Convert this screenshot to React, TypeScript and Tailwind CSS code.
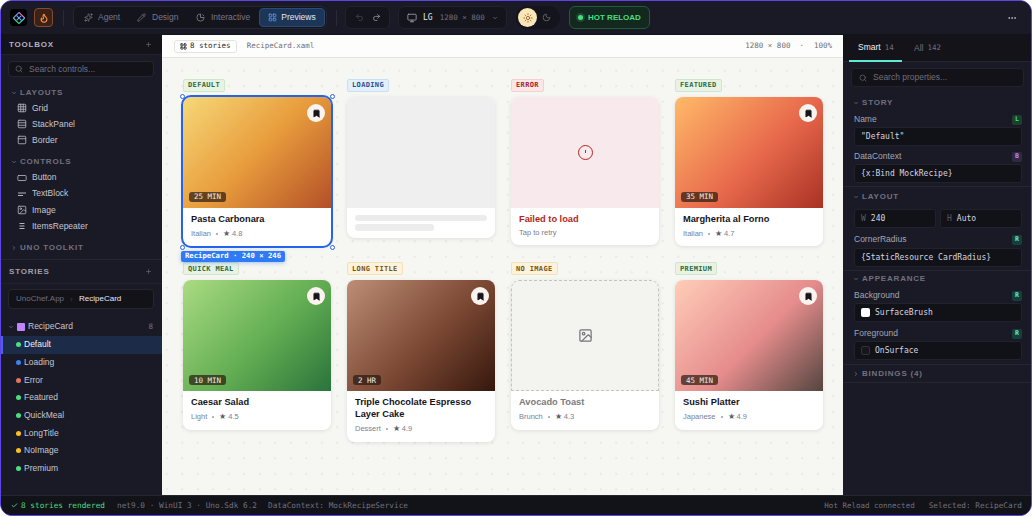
import React from 'react';
import {
  Plus, Search, ChevronDown, ChevronRight, Grid3x3, Rows3, PanelTop, RectangleHorizontal, Image as ImageIcon,
  Pencil, LayoutGrid, Undo2, Redo2, Monitor, Sun, Moon, Flame, Ellipsis, Bookmark, Check, Sparkles,
} from 'lucide-react';

const mono = "font-['DejaVu_Sans_Mono',monospace]";

const SectionHead: React.FC<{ label: string; open?: boolean; className?: string }> = ({ label, open = true, className = '' }) => (
  <div className={`flex items-center gap-[3px] pl-[10px] h-[10px] text-[8px] font-bold tracking-[0.1em] text-[#71717f] ${className}`}>
    {open ? <ChevronDown className="w-[6px] h-[6px]" strokeWidth={3} /> : <ChevronRight className="w-[6px] h-[6px]" strokeWidth={3} />}
    <span>{label}</span>
  </div>
);

const ToolRow: React.FC<{ icon: React.ReactNode; label: string }> = ({ icon, label }) => (
  <div className="flex items-center h-[16.2px] pl-[16px] text-[8.5px] text-[#c6c6d0]">
    <span className="w-[15px] flex items-center text-[#b4b4c0]">{icon}</span>
    <span>{label}</span>
  </div>
);

const Toolbox = () => (
  <div className="flex flex-col">
    <div className="h-[20px] flex items-center justify-between pl-[8px] pr-[10px] bg-[#131319] border-b border-[#22222c]">
      <span className="text-[8px] font-bold tracking-[0.1em] text-[#b4b4c0]">TOOLBOX</span>
      <Plus className="w-[7px] h-[7px] text-[#71717f]" />
    </div>
    <div className="ml-[7px] mr-[8px] mt-[6px] h-[16px] flex items-center gap-[6px] px-[6px] rounded-[4px] bg-[#121218] border border-[#262630] text-[8.5px] text-[#6f6f7d]">
      <Search className="w-[8px] h-[8px]" />
      <span>Search controls...</span>
    </div>
    <SectionHead label="LAYOUTS" className="mt-[11px]" />
    <div className="mt-[2px]">
      <ToolRow icon={<Grid3x3 className="w-[10px] h-[10px]" />} label="Grid" />
      <ToolRow icon={<Rows3 className="w-[10px] h-[10px]" />} label="StackPanel" />
      <ToolRow icon={<PanelTop className="w-[10px] h-[10px]" />} label="Border" />
    </div>
    <SectionHead label="CONTROLS" className="mt-[8px]" />
    <div className="mt-[3px]">
      <ToolRow icon={<RectangleHorizontal className="w-[10px] h-[10px]" />} label="Button" />
      <ToolRow
        icon={
          <svg viewBox="0 0 10 10" className="w-[10px] h-[10px]" stroke="currentColor" strokeWidth="1" fill="none">
            <path d="M1 4h8M1 6.5h5" />
          </svg>
        }
        label="TextBlock"
      />
      <ToolRow icon={<ImageIcon className="w-[10px] h-[10px]" />} label="Image" />
      <ToolRow
        icon={
          <svg viewBox="0 0 10 10" className="w-[10px] h-[10px]" stroke="currentColor" strokeWidth="1" fill="none">
            <path d="M2.5 2.5h5M2.5 5h5M2.5 7.5h5" />
          </svg>
        }
        label="ItemsRepeater"
      />
    </div>
    <SectionHead label="UNO TOOLKIT" open={false} className="mt-[9px]" />
  </div>
);

const stories = [
  { name: 'Default', dot: 'bg-[#4ade80]', active: true },
  { name: 'Loading', dot: 'bg-[#3b82f6]' },
  { name: 'Error', dot: 'bg-[#e8735a]' },
  { name: 'Featured', dot: 'bg-[#4ade80]' },
  { name: 'QuickMeal', dot: 'bg-[#4ade80]' },
  { name: 'LongTitle', dot: 'bg-[#fbbf24]' },
  { name: 'NoImage', dot: 'bg-[#fbbf24]' },
  { name: 'Premium', dot: 'bg-[#4ade80]' },
];

const Stories = () => (
  <div className="flex flex-col flex-1 mt-[6px] border-t border-[#262630]">
    <div className="h-[24px] flex items-center justify-between pl-[8px] pr-[10px] border-b border-[#22222c]">
      <span className="text-[8px] font-bold tracking-[0.1em] text-[#a0a0ac]">STORIES</span>
      <Plus className="w-[7px] h-[7px] text-[#71717f]" />
    </div>
    <div className="ml-[7px] mr-[8px] mt-[5px] h-[20px] flex items-center gap-[5px] px-[7px] rounded-[4px] bg-[#121218] border border-[#262630] text-[8px]">
      <span className="text-[#6f6f7d]">UnoChef.App</span>
      <ChevronRight className="w-[5px] h-[5px] text-[#6f6f7d]" />
      <span className="text-[#e8e8f0]">RecipeCard</span>
    </div>
    <div className="mt-[8px] h-[18.5px] flex items-center pl-[7px] pr-[9px] text-[8.5px] text-[#c6c6d0]">
      <ChevronDown className="w-[6px] h-[6px] text-[#71717f]" strokeWidth={3} />
      <span className="ml-[3px] w-[8px] h-[8px] rounded-[1px] bg-[#c084fc]" />
      <span className="ml-[3px] flex-1">RecipeCard</span>
      <span className={`${mono} text-[7.5px] text-[#71717f]`}>8</span>
    </div>
    {stories.map((s) => (
      <div
        key={s.name}
        className={`h-[17.7px] flex items-center gap-[3px] text-[8.5px] ${
          s.active ? 'bg-[#1c2b47] border-l-2 border-[#4f5fe0] pl-[13px] text-[#eef0f8]' : 'pl-[15px] text-[#c6c6d0]'
        }`}
      >
        <span className={`w-[5px] h-[5px] rounded-full ${s.dot}`} />
        <span>{s.name}</span>
      </div>
    ))}
  </div>
);

const TopBar = () => (
  <div className="h-[34px] flex items-center bg-[#191a25] border-b border-[#12121a] pl-[9px] pr-[14px] shrink-0">
    <div className="w-[17px] h-[17px] rounded-[4px] bg-black flex items-center justify-center">
      <svg viewBox="0 0 16 16" className="w-[14px] h-[14px]" fill="none" strokeWidth="1.3">
        <path d="M8 1.5 14.5 8" stroke="#f472b6" />
        <path d="M14.5 8 8 14.5" stroke="#22d3ee" />
        <path d="M8 14.5 1.5 8" stroke="#4ade80" />
        <path d="M1.5 8 8 1.5" stroke="#818cf8" />
        <path d="M5 5l6 6M5.5 10.5 10.5 5.5" stroke="#60a5fa" />
      </svg>
    </div>
    <div className="ml-[7px] w-[19px] h-[19px] rounded-[4px] bg-[#3b2219] border border-[#8a4a2a] flex items-center justify-center">
      <Flame className="w-[10px] h-[10px] text-[#fb923c]" strokeWidth={2.5} />
    </div>
    <div className="ml-[10px] w-px h-[16px] bg-[#2a2a36]" />
    <div className="ml-[9px] w-[254px] h-[23px] flex items-center pl-[2px] rounded-[6px] bg-[#14141c] border border-[#262630] text-[8.5px] text-[#77778a]">
      <div className="flex items-center gap-[5px] pl-[8px] w-[53px]">
        <Sparkles className="w-[9px] h-[9px]" />
        <span>Agent</span>
      </div>
      <div className="flex items-center gap-[6px] pl-[8px] w-[59px]">
        <Pencil className="w-[9px] h-[9px]" />
        <span>Design</span>
      </div>
      <div className="flex items-center gap-[6px] pl-[8px] w-[71px]">
        <svg viewBox="0 0 10 10" className="w-[9px] h-[9px]" fill="none" stroke="currentColor" strokeWidth="1">
          <path d="M5 1a4 4 0 1 0 4 4" />
          <path d="M5 1v4h4" />
          <path d="M7 1.5 9 3.5" />
        </svg>
        <span>Interactive</span>
      </div>
      <div className="h-[19px] w-[66px] flex items-center justify-center gap-[4px] rounded-[4px] bg-[#1d3557] border border-[#2a4a78] text-[#e2e8f5]">
        <LayoutGrid className="w-[9px] h-[9px] text-[#60a5fa]" />
        <span>Previews</span>
      </div>
    </div>
    <div className="ml-[9px] w-px h-[16px] bg-[#2a2a36]" />
    <div className="ml-[8px] w-[45px] h-[23px] flex items-center justify-center gap-[8px] rounded-[6px] bg-[#14141c] border border-[#22222c]">
      <Undo2 className="w-[9px] h-[9px] text-[#4a4a56]" />
      <Redo2 className="w-[9px] h-[9px] text-[#a0a0ac]" />
    </div>
    <div className="ml-[8px] w-[109px] h-[23px] flex items-center pl-[8px] rounded-[6px] bg-[#14141c] border border-[#22222c]">
      <Monitor className="w-[10px] h-[10px] text-[#a0a0ac]" />
      <span className={`${mono} ml-[6px] text-[8px] text-[#e8e8f0]`}>LG</span>
      <span className={`${mono} ml-[7px] text-[7.5px] text-[#71717f]`}>1280 × 800</span>
      <ChevronDown className="ml-[7px] w-[6px] h-[6px] text-[#71717f]" strokeWidth={3} />
    </div>
    <div className="ml-[9px] w-[44px] h-[23px] flex items-center pl-[2px] rounded-full bg-[#14141c]">
      <div className="w-[19px] h-[19px] rounded-full bg-[#fbe6b8] flex items-center justify-center">
        <Sun className="w-[10px] h-[10px] text-[#8a5a1a]" />
      </div>
      <Moon className="ml-[5px] w-[9px] h-[9px] text-[#71717f]" />
    </div>
    <div className="ml-[9px] w-[81px] h-[23px] flex items-center pl-[8px] gap-[5px] rounded-[6px] bg-[#13291f] border border-[#1f5c38]">
      <span className="w-[5px] h-[5px] rounded-full bg-[#4ade80] ring-2 ring-[#1d4a33]" />
      <span className="text-[8px] font-bold text-[#4ade80]">HOT RELOAD</span>
    </div>
    <Ellipsis className="ml-auto w-[10px] h-[10px] text-[#c6c6d0]" />
  </div>
);

type Tone = 'green' | 'blue' | 'red' | 'amber';
const tones: Record<Tone, string> = {
  green: 'bg-[#e8f3e6] border-[#cfe5cc] text-[#2f6b3a]',
  blue: 'bg-[#e3effb] border-[#c8dff6] text-[#28508f]',
  red: 'bg-[#fbe7e6] border-[#f5d0ce] text-[#a3242c]',
  amber: 'bg-[#fdf3dc] border-[#f4e2b4] text-[#7a5212]',
};

const Tag: React.FC<{ label: string; tone: Tone }> = ({ label, tone }) => (
  <div className={`${mono} self-start h-[13px] flex items-center px-[4px] rounded-[2px] border text-[7px] font-bold tracking-[0.05em] ${tones[tone]}`}>
    {label}
  </div>
);

const Meta: React.FC<{ cat: string; rating: string }> = ({ cat, rating }) => (
  <div className="mt-[3px] flex items-center text-[7.5px] text-[#7b8090]">
    <span className="text-[#7a8296]">{cat}</span>
    <span className="mx-[5px] w-[2px] h-[2px] rounded-full bg-[#9a9aa6]" />
    <span className="text-[#5d5d6a]">★</span>
    <span className="ml-[2px]">{rating}</span>
  </div>
);

const Photo: React.FC<{ gradient: string; time: string }> = ({ gradient, time }) => (
  <div className={`relative h-[111px] ${gradient}`}>
    <div className="absolute top-[7px] right-[6px] w-[18px] h-[18px] rounded-full bg-[#faf3ee] flex items-center justify-center">
      <Bookmark className="w-[9px] h-[9px] text-[#16161c]" fill="currentColor" />
    </div>
    <div className={`${mono} absolute left-[6px] bottom-[6px] h-[10px] flex items-center px-[5px] rounded-[3px] bg-[#2a1a10]/70 text-[7.5px] text-[#f2ebe2]`}>
      {time}
    </div>
  </div>
);

const Card: React.FC<{ children: React.ReactNode; className?: string }> = ({ children, className = '' }) => (
  <div className={`rounded-[8px] bg-white overflow-hidden shadow-[0_1px_4px_rgba(0,0,0,0.1)] ${className}`}>{children}</div>
);

const FoodCard: React.FC<{ gradient: string; time: string; title: React.ReactNode; cat: string; rating: string }> = ({
  gradient, time, title, cat, rating,
}) => (
  <Card>
    <Photo gradient={gradient} time={time} />
    <div className="px-[8px] pt-[5px] pb-[7px]">
      <div className="text-[9.25px] leading-[12px] font-bold text-[#14141c]">{title}</div>
      <Meta cat={cat} rating={rating} />
    </div>
  </Card>
);

const Canvas = () => (
  <div className="flex-1 flex flex-col min-w-0 bg-[#f6f6f2]">
    <div className="h-[23px] shrink-0 flex items-center pl-[12px] pr-[11px] bg-[#fdfdfb] border-b border-[#e4e4de]">
      <div className={`${mono} h-[13px] flex items-center gap-[3px] px-[5px] rounded-[3px] bg-white border border-[#e4e4de] text-[7.5px] text-[#2a2a32]`}>
        <LayoutGrid className="w-[7px] h-[7px]" strokeWidth={3} />
        <span>8 stories</span>
      </div>
      <span className={`${mono} ml-[10px] text-[7.5px] text-[#6f6f78]`}>RecipeCard.xaml</span>
      <span className={`${mono} ml-auto text-[7.5px] text-[#6f6f78]`}>1280 × 800</span>
      <span className={`${mono} ml-[9px] text-[7.5px] text-[#6f6f78]`}>·</span>
      <span className={`${mono} ml-[10px] text-[7.5px] text-[#6f6f78]`}>100%</span>
    </div>
    <div className="flex-1 px-[21px] pt-[21px] bg-[radial-gradient(circle,#e0e0d8_0.6px,transparent_0.8px)] bg-[length:15.5px_15.5px] bg-[position:-3px_5px]">
      <div className="grid grid-cols-[148px_148px_148px_148px] gap-x-[16px] gap-y-[16px] items-start">
        <div className="flex flex-col gap-[5px]">
          <Tag label="DEFAULT" tone="green" />
          <div className="relative">
            <FoodCard gradient="bg-[linear-gradient(135deg,#f6d878_0%,#e89c3c_50%,#b34f28_100%)]" time="25 MIN" title="Pasta Carbonara" cat="Italian" rating="4.8" />
            <div className="absolute -inset-[2px] rounded-[10px] border-2 border-[#2563eb]" />
            {['-left-[3.5px] -top-[3.5px]', '-right-[3.5px] -top-[3.5px]', '-left-[3.5px] -bottom-[3.5px]', '-right-[3.5px] -bottom-[3.5px]'].map((p) => (
              <span key={p} className={`absolute ${p} w-[5px] h-[5px] rounded-full bg-white border border-[#2563eb]`} />
            ))}
            <div className={`${mono} absolute -left-[2px] top-[154px] h-[11px] flex items-center px-[4px] rounded-[2px] bg-[#2f7bf6] text-[7.25px] font-bold text-white whitespace-nowrap shadow-[0_1px_4px_rgba(47,123,246,0.4)]`}>
              RecipeCard · 240 × 246
            </div>
          </div>
        </div>
        <div className="flex flex-col gap-[5px]">
          <Tag label="LOADING" tone="blue" />
          <Card>
            <div className="h-[111px] bg-[#efefef]" />
            <div className="px-[8px] pt-[7px] pb-[7px] flex flex-col gap-[3px]">
              <div className="h-[6px] rounded-[3px] bg-[#ececec]" />
              <div className="h-[7px] w-[79px] rounded-[3px] bg-[#ececec]" />
            </div>
          </Card>
        </div>
        <div className="flex flex-col gap-[5px]">
          <Tag label="ERROR" tone="red" />
          <Card>
            <div className="h-[111px] bg-[#f7e9ec] flex items-center justify-center">
              <span className="w-[15px] h-[15px] rounded-full border border-[#b3261e] flex items-start justify-center pt-[4px]">
                <span className="w-px h-[3px] bg-[#b3261e]" />
              </span>
            </div>
            <div className="px-[8px] pt-[5px] pb-[7px]">
              <div className="text-[9.25px] leading-[12px] font-bold text-[#b3261e]">Failed to load</div>
              <div className="mt-[2px] text-[7.5px] text-[#7b7b86]">Tap to retry</div>
            </div>
          </Card>
        </div>
        <div className="flex flex-col gap-[5px]">
          <Tag label="FEATURED" tone="green" />
          <FoodCard gradient="bg-[linear-gradient(135deg,#ffba68_0%,#e8694c_55%,#a93224_100%)]" time="35 MIN" title="Margherita al Forno" cat="Italian" rating="4.7" />
        </div>
        <div className="flex flex-col gap-[5px]">
          <Tag label="QUICK MEAL" tone="green" />
          <FoodCard gradient="bg-[linear-gradient(135deg,#aadb82_0%,#62ad52_55%,#2a733c_100%)]" time="10 MIN" title="Caesar Salad" cat="Light" rating="4.5" />
        </div>
        <div className="flex flex-col gap-[5px]">
          <Tag label="LONG TITLE" tone="amber" />
          <FoodCard
            gradient="bg-[linear-gradient(135deg,#bd8e75_0%,#7b4833_55%,#35170d_100%)]"
            time="2 HR"
            title={<>Triple Chocolate Espresso<br />Layer Cake</>}
            cat="Dessert"
            rating="4.9"
          />
        </div>
        <div className="flex flex-col gap-[5px]">
          <Tag label="NO IMAGE" tone="amber" />
          <Card>
            <div className="h-[111px] bg-[#f3f3ef] border border-dashed border-[#c4c4bd] rounded-t-[8px] flex items-center justify-center">
              <ImageIcon className="w-[15px] h-[15px] text-[#77777a]" />
            </div>
            <div className="px-[8px] pt-[5px] pb-[7px]">
              <div className="text-[9.25px] leading-[12px] font-bold text-[#7a7a80]">Avocado Toast</div>
              <Meta cat="Brunch" rating="4.3" />
            </div>
          </Card>
        </div>
        <div className="flex flex-col gap-[5px]">
          <Tag label="PREMIUM" tone="green" />
          <FoodCard gradient="bg-[linear-gradient(135deg,#ffcdb8_0%,#e58c8c_55%,#54453f_100%)]" time="45 MIN" title="Sushi Platter" cat="Japanese" rating="4.9" />
        </div>
      </div>
    </div>
  </div>
);

const badgeTones = {
  L: 'bg-[#1c4030] text-[#4ade80]',
  B: 'bg-[#2f2a44] text-[#c084fc]',
  R: 'bg-[#153f3c] text-[#5eead4]',
};

const PropLabel: React.FC<{ label: string; badge: 'L' | 'B' | 'R' }> = ({ label, badge }) => (
  <div className="h-[11px] flex items-center justify-between text-[8.5px] text-[#a5a5b2]">
    <span>{label}</span>
    <span className={`${mono} w-[10px] h-[10px] rounded-[2px] flex items-center justify-center text-[6.5px] font-bold ${badgeTones[badge]}`}>{badge}</span>
  </div>
);

const Field: React.FC<{ children: React.ReactNode; className?: string }> = ({ children, className = '' }) => (
  <div className={`${mono} h-[19px] flex items-center px-[6px] rounded-[3px] bg-[#111118] border border-[#22222c] text-[8px] text-[#d6d6e0] ${className}`}>
    {children}
  </div>
);

const Inspector = () => (
  <div className="w-[188px] shrink-0 flex flex-col bg-[#191a25]">
    <div className="h-[27px] flex items-stretch pl-[6px] bg-[#131319] border-b border-[#262630] text-[8.5px]">
      <div className="w-[53px] pl-[9px] flex items-center gap-[4px] border-b-2 border-[#5eead4] -mb-px text-[#eef0f8]">
        <span>Smart</span>
        <span className={`${mono} text-[7.5px] text-[#71717f]`}>14</span>
      </div>
      <div className="ml-[12px] flex items-center gap-[4px] text-[#71717f]">
        <span>All</span>
        <span className={`${mono} text-[7.5px]`}>142</span>
      </div>
    </div>
    <div className="ml-[8px] mr-[7px] mt-[6px] h-[19px] flex items-center gap-[6px] px-[7px] rounded-[4px] bg-[#121218] border border-[#22222c] text-[8.5px] text-[#6f6f7d]">
      <Search className="w-[8px] h-[8px]" />
      <span>Search properties...</span>
    </div>
    <SectionHead label="STORY" className="mt-[11px]" />
    <div className="pl-[11px] pr-[9px] mt-[6px] flex flex-col">
      <PropLabel label="Name" badge="L" />
      <Field className="mt-[2px]">"Default"</Field>
      <div className="mt-[5px]"><PropLabel label="DataContext" badge="B" /></div>
      <Field className="mt-[2px]">{'{x:Bind MockRecipe}'}</Field>
    </div>
    <div className="mt-[3px] border-t border-[#262630]" />
    <SectionHead label="LAYOUT" className="mt-[5px]" />
    <div className="pl-[11px] pr-[9px] mt-[7px] flex flex-col">
      <div className="flex gap-[4px]">
        <Field className="flex-1 gap-[5px]"><span className="text-[#5d5d6a]">W</span>240</Field>
        <Field className="flex-1 gap-[5px]"><span className="text-[#5d5d6a]">H</span>Auto</Field>
      </div>
      <div className="mt-[6px]"><PropLabel label="CornerRadius" badge="R" /></div>
      <Field className="mt-[3px]">{'{StaticResource CardRadius}'}</Field>
    </div>
    <div className="mt-[3px] border-t border-[#262630]" />
    <SectionHead label="APPEARANCE" className="mt-[3px]" />
    <div className="pl-[11px] pr-[9px] mt-[6px] flex flex-col">
      <PropLabel label="Background" badge="R" />
      <Field className="mt-[2px] gap-[5px]">
        <span className="w-[9px] h-[9px] rounded-[2px] bg-white" />
        SurfaceBrush
      </Field>
      <div className="mt-[6px]"><PropLabel label="Foreground" badge="R" /></div>
      <Field className="mt-[2px] gap-[5px]">
        <span className="w-[9px] h-[9px] rounded-[2px] bg-[#16161e] border border-[#32323e]" />
        OnSurface
      </Field>
    </div>
    <div className="mt-[4px] border-t border-[#262630]" />
    <SectionHead label="BINDINGS (4)" open={false} className="mt-[4px]" />
    <div className="mt-[3px] border-t border-[#262630]" />
  </div>
);

const StatusBar = () => (
  <div className={`${mono} h-[20px] shrink-0 flex items-center pl-[10px] pr-[9px] bg-[#121219] border-t border-[#262630] text-[7.75px] text-[#71717f]`}>
    <Check className="w-[7px] h-[7px] text-[#4ade80]" strokeWidth={3} />
    <span className="ml-[3px] text-[#4ade80]">8 stories rendered</span>
    <span className="ml-[12px]">net9.0 · WinUI 3 · Uno.Sdk 6.2</span>
    <span className="ml-[11px]">DataContext: MockRecipeService</span>
    <span className="ml-auto text-[7.5px]">Hot Reload connected</span>
    <span className="ml-[14px]">Selected: RecipeCard</span>
  </div>
);

const App: React.FC = () => {
  return (
    <div className="w-[1032px] h-[516px] bg-white font-['Liberation_Sans',sans-serif]">
      <div className="w-full h-full flex flex-col overflow-hidden rounded-[12px] border border-[#5b47e8] bg-[#191a25]">
        <TopBar />
        <div className="flex-1 flex min-h-0">
          <div className="w-[161px] shrink-0 flex flex-col bg-[#191a25]">
            <Toolbox />
            <Stories />
          </div>
          <Canvas />
          <Inspector />
        </div>
        <StatusBar />
      </div>
    </div>
  );
};

export default App;
